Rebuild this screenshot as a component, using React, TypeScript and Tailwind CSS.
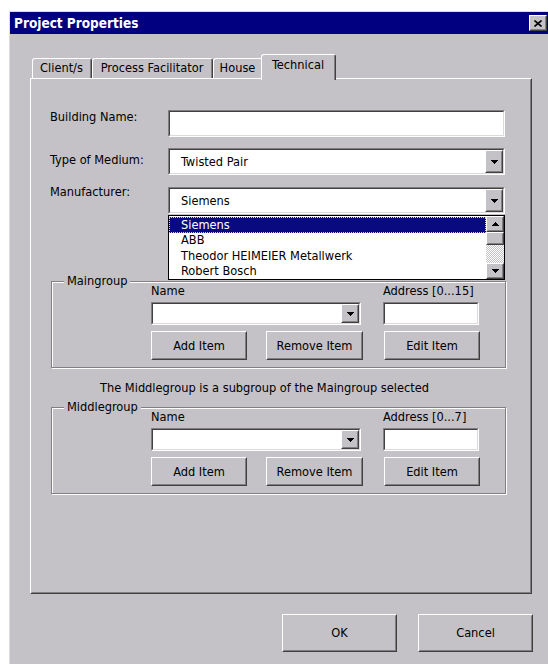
import type { ReactNode } from 'react'

type BoxProps = { className?: string; children?: ReactNode }

// Win2k-style sunken edit field
function Sunken({ className = '', children }: BoxProps) {
  return (
    <div
      className={`border border-b-white border-l-[#808080] border-r-white border-t-[#808080] ${className}`}
    >
      <div className="flex h-full border border-b-[#dcdadf] border-l-[#404040] border-r-[#dcdadf] border-t-[#404040] bg-white">
        {children}
      </div>
    </div>
  )
}

// Raised 3D face used for buttons, arrows and the scroll thumb
function Raised({ className = '', children }: BoxProps) {
  return (
    <div
      className={`border border-b-[#404040] border-l-white border-r-[#404040] border-t-white ${className}`}
    >
      <div className="flex h-full items-center justify-center border border-b-[#808080] border-l-[#c4c2c7] border-r-[#808080] border-t-[#c4c2c7] bg-[#c4c2c7]">
        {children}
      </div>
    </div>
  )
}

function Arrow({ up = false }: { up?: boolean }) {
  const rows = up ? [3, 2, 1, 0] : [0, 1, 2, 3]
  return (
    <svg width="7" height="4" viewBox="0 0 7 4" shapeRendering="crispEdges">
      {rows.map((inset, y) => (
        <rect key={y} x={inset} y={y} width={7 - inset * 2} height={1} fill="#000" />
      ))}
    </svg>
  )
}

function Combo({ value, className = '' }: { value?: string; className?: string }) {
  return (
    <Sunken className={className}>
      <span className="flex-1 self-center pl-[11px]">{value}</span>
      <Raised className="w-[18px]">
        <Arrow />
      </Raised>
    </Sunken>
  )
}

function PushButton({ className = '', children }: BoxProps) {
  return <Raised className={`h-[29px] ${className}`}>{children}</Raised>
}

function Tab({ label, active = false }: { label: string; active?: boolean }) {
  if (active) {
    return (
      <div className="relative z-10 -mb-[2px] -ml-[2px] h-[26px] w-[75px] rounded-t-[3px] border-l border-r border-t border-l-white border-r-[#404040] border-t-white bg-[#c4c2c7]">
        <div className="flex h-full justify-center whitespace-nowrap border-r border-r-[#808080] pt-[2px]">
          {label}
        </div>
      </div>
    )
  }
  return (
    <div className="h-[20px] w-full rounded-t-[3px] border-l border-r border-t border-l-white border-r-[#404040] border-t-white bg-[#c4c2c7]">
      <div className="flex h-full justify-center whitespace-nowrap border-r border-r-[#808080] pt-[1px]">
        {label}
      </div>
    </div>
  )
}

function GroupBox({ title, address }: { title: string; address: string }) {
  return (
    <fieldset className="ml-[1px] w-[455px] border border-[#808080] pb-[7px] shadow-[inset_1px_1px_0_#ffffff,1px_1px_0_#ffffff]">
      <legend className="ml-[12px] bg-[#c4c2c7] px-[3px]">{title}</legend>
      <div className="-mt-[6px] pl-[99px]">
        <div className="flex h-4">
          <span className="w-[232px]">Name</span>
          <span>{address}</span>
        </div>
        <div className="mt-[3px] flex">
          <Combo className="h-[23px] w-[210px]" />
          <Sunken className="ml-[22px] h-[23px] w-[96px]" />
        </div>
        <div className="mt-[6px] flex">
          <PushButton className="w-[96px]">Add Item</PushButton>
          <PushButton className="ml-[19px] w-[97px]">Remove Item</PushButton>
          <PushButton className="ml-[21px] w-[96px]">Edit Item</PushButton>
        </div>
      </div>
    </fieldset>
  )
}

const manufacturers = ['Siemens', 'ABB', 'Theodor HEIMEIER Metallwerk', 'Robert Bosch']

function ManufacturerList() {
  return (
    <div className="absolute left-0 top-full z-20 mt-[1px] flex h-[65px] w-[337px] border border-black bg-white">
      <div className="flex-1 pt-[1px]">
        {manufacturers.map((name, i) => (
          <div
            key={name}
            className={
              i === 0
                ? 'flex h-[15.5px] items-center border border-dotted border-[#e0d890] bg-[#0a0a80] pl-[11px] text-white'
                : 'flex h-[15.5px] items-center border border-transparent pl-[11px]'
            }
          >
            {name}
          </div>
        ))}
      </div>
      <div className="flex w-[18px] flex-col">
        <Raised className="h-[16px]">
          <Arrow up />
        </Raised>
        <Raised className="h-[13px]" />
        <div className="flex-1 bg-[repeating-conic-gradient(#ffffff_0_25%,#c4c2c7_0_50%)] bg-[length:2px_2px]" />
        <Raised className="h-[16px]">
          <Arrow />
        </Raised>
      </div>
    </div>
  )
}

export default function App() {
  return (
    <div className="h-[664px] w-[548px] overflow-hidden bg-white pl-[9px] pt-[11px] font-['DejaVu_Sans_Condensed','Liberation_Sans',sans-serif] text-[12.7px] leading-4 text-black">
      <div className="h-[660px] w-[542px] border-l border-t border-[#dedce1] bg-[#c4c2c7]">
        {/* caption bar */}
        <div className="mr-[2px] flex h-[22px] items-center justify-between bg-[#000080] pl-[4px] pr-[2px]">
          <span className="text-[13.5px] font-bold text-white">Project Properties</span>
          <Raised className="h-[16px] w-[18px]">
            <svg width="8" height="7" viewBox="0 0 8 7">
              <path d="M0.5 0.5L7.5 6.5M7.5 0.5L0.5 6.5" stroke="#000" strokeWidth="1.6" />
            </svg>
          </Raised>
        </div>

        <div className="ml-[22px] mt-[20px] flex h-[24px] items-end">
          <div className="w-[60px]">
            <Tab label="Client/s" />
          </div>
          <div className="w-[121px]">
            <Tab label="Process Facilitator" />
          </div>
          <div className="w-[50px]">
            <Tab label="House" />
          </div>
          <Tab label="Technical" active />
        </div>

        {/* tab page */}
        <div className="ml-[20px] h-[516px] w-[502px] border border-b-[#404040] border-l-white border-r-[#404040] border-t-white">
          <div className="h-full border border-b-[#808080] border-l-[#c4c2c7] border-r-[#808080] border-t-[#c4c2c7] pl-[18px] pt-[30px]">
            <div className="flex items-start">
              <span className="-mt-px w-[118px]">Building Name:</span>
              <Sunken className="h-[27px] w-[337px]" />
            </div>
            <div className="mt-[11px] flex items-start">
              <span className="mt-[4px] w-[118px]">Type of Medium:</span>
              <Combo value="Twisted Pair" className="h-[27px] w-[337px]" />
            </div>
            <div className="mt-[12px] flex items-start">
              <span className="-mt-[3px] w-[118px]">Manufacturer:</span>
              <div className="relative">
                <Combo value="Siemens" className="h-[27px] w-[337px]" />
                <ManufacturerList />
              </div>
            </div>

            <div className="mt-[59px]">
              <GroupBox title="Maingroup" address="Address [0...15]" />
            </div>
            <p className="ml-[50px] mt-[12px]">The Middlegroup is a subgroup of the Maingroup selected</p>
            <div className="mt-[3px]">
              <GroupBox title="Middlegroup" address="Address [0...7]" />
            </div>
          </div>
        </div>

        <div className="mt-[20px] flex w-[523px] justify-end gap-[21px]">
          <Raised className="h-[38px] w-[115px]">OK</Raised>
          <Raised className="h-[38px] w-[115px]">Cancel</Raised>
        </div>
      </div>
    </div>
  )
}
